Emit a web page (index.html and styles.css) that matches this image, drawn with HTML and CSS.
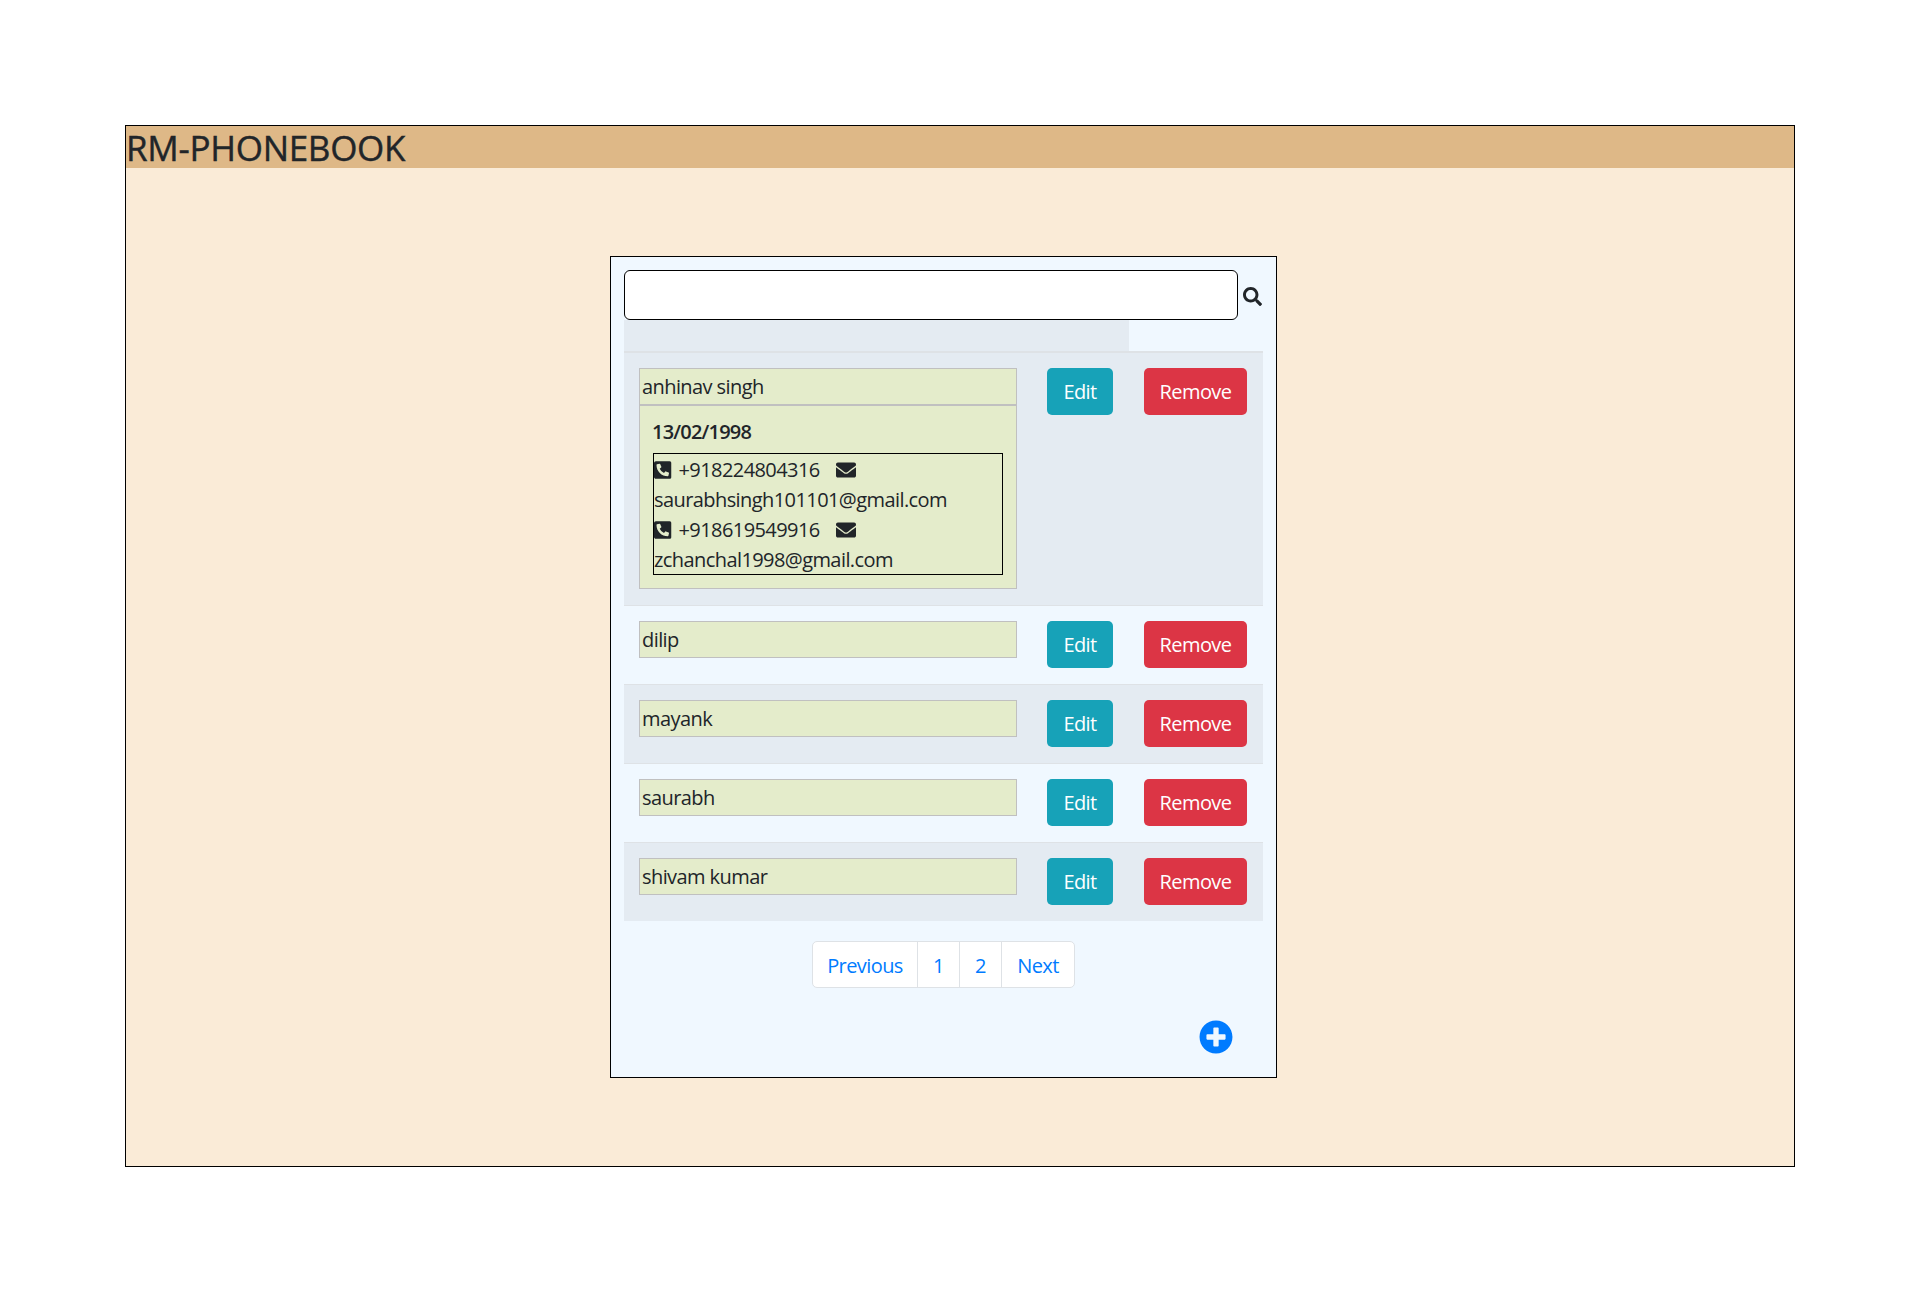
FILE: index.html
```html
<!DOCTYPE html>
<html lang="en">
<head>
<meta charset="utf-8">
<title>RM-PHONEBOOK</title>
<link rel="stylesheet" href="styles.css">
</head>
<body>
<svg class="sprite" aria-hidden="true">
  <defs>
    <symbol id="i-search" viewBox="0 0 512 512"><path d="M505 442.7L405.3 343c-4.5-4.5-10.6-7-17-7H372c27.6-35.3 44-79.7 44-128C416 93.1 322.9 0 208 0S0 93.1 0 208s93.1 208 208 208c48.3 0 92.7-16.4 128-44v16.3c0 6.4 2.5 12.5 7 17l99.7 99.7c9.4 9.4 24.6 9.4 33.9 0l28.3-28.3c9.4-9.4 9.4-24.6.1-34zM208 336c-70.7 0-128-57.2-128-128 0-70.7 57.2-128 128-128 70.7 0 128 57.2 128 128 0 70.7-57.2 128-128 128z"/></symbol>
    <symbol id="i-phone" viewBox="0 0 448 512"><path d="M400 32H48C21.49 32 0 53.49 0 80v352c0 26.51 21.49 48 48 48h352c26.51 0 48-21.49 48-48V80c0-26.51-21.49-48-48-48zm-16.39 307.37l-15 65A15 15 0 0 1 354 416C194 416 64 286.29 64 126a15.7 15.7 0 0 1 11.63-14.61l65-15A18.23 18.23 0 0 1 144 96a16.27 16.27 0 0 1 13.79 9.09l30 70A17.9 17.9 0 0 1 189 181a17 17 0 0 1-5.5 11.61l-37.89 31a231.91 231.91 0 0 0 110.78 110.78l31-37.89A17 17 0 0 1 299 291a17.85 17.85 0 0 1 5.91 1.21l70 30A16.25 16.25 0 0 1 384 336a17.41 17.41 0 0 1-.39 3.37z"/></symbol>
    <symbol id="i-mail" viewBox="0 0 512 512"><path d="M502.3 190.8c3.9-3.1 9.7-.2 9.7 4.7V400c0 26.5-21.5 48-48 48H48c-26.5 0-48-21.5-48-48V195.6c0-5 5.7-7.8 9.7-4.7 22.4 17.4 52.1 39.5 154.1 113.6 21.1 15.4 56.7 47.8 92.2 47.6 35.7.3 72-32.8 92.3-47.6 102-74.1 131.6-96.3 154-113.7zM256 320c23.2.4 56.6-29.2 73.4-41.4 132.7-96.3 142.8-104.7 173.4-128.7 5.8-4.5 9.2-11.5 9.2-18.9v-19c0-26.5-21.5-48-48-48H48C21.5 64 0 85.5 0 112v19c0 7.4 3.4 14.3 9.2 18.9 30.6 23.9 40.7 32.4 173.4 128.7 16.8 12.2 50.2 41.8 73.4 41.4z"/></symbol>
    <symbol id="i-plus" viewBox="0 0 512 512"><path d="M256 8C119 8 8 119 8 256s111 248 248 248 248-111 248-248S393 8 256 8zm144 276c0 6.6-5.4 12-12 12h-92v92c0 6.6-5.4 12-12 12h-56c-6.6 0-12-5.4-12-12v-92h-92c-6.6 0-12-5.4-12-12v-56c0-6.6 5.4-12 12-12h92v-92c0-6.6 5.4-12 12-12h56c6.6 0 12 5.4 12 12v92h92c6.6 0 12 5.4 12 12v56z"/></symbol>
  </defs>
</svg>

<main class="app">
  <h1 class="app-title">RM-PHONEBOOK</h1>
  <section class="card">
    <div class="search">
      <input class="search-input" type="text" aria-label="Search">
      <svg class="icon icon-search"><use href="#i-search"/></svg>
    </div>

    <div class="table">
      <div class="table-head"><div class="table-head-cell"></div></div>

      <div class="row row-odd">
        <div class="cell">
          <div class="name">anhinav singh</div>
          <div class="details">
            <div class="dob">13/02/1998</div>
            <div class="contacts">
              <div class="line">
                <svg class="icon icon-phone"><use href="#i-phone"/></svg>
                <span class="phone">+918224804316</span>
                <svg class="icon icon-mail"><use href="#i-mail"/></svg>
              </div>
              <div class="line">saurabhsingh101101@gmail.com</div>
              <div class="line">
                <svg class="icon icon-phone"><use href="#i-phone"/></svg>
                <span class="phone">+918619549916</span>
                <svg class="icon icon-mail"><use href="#i-mail"/></svg>
              </div>
              <div class="line">zchanchal1998@gmail.com</div>
            </div>
          </div>
        </div>
        <div class="cell"><button class="btn btn-edit">Edit</button></div>
        <div class="cell"><button class="btn btn-remove">Remove</button></div>
      </div>

      <div class="row">
        <div class="cell"><div class="name">dilip</div></div>
        <div class="cell"><button class="btn btn-edit">Edit</button></div>
        <div class="cell"><button class="btn btn-remove">Remove</button></div>
      </div>
      <div class="row row-odd">
        <div class="cell"><div class="name">mayank</div></div>
        <div class="cell"><button class="btn btn-edit">Edit</button></div>
        <div class="cell"><button class="btn btn-remove">Remove</button></div>
      </div>
      <div class="row">
        <div class="cell"><div class="name">saurabh</div></div>
        <div class="cell"><button class="btn btn-edit">Edit</button></div>
        <div class="cell"><button class="btn btn-remove">Remove</button></div>
      </div>
      <div class="row row-odd">
        <div class="cell"><div class="name">shivam kumar</div></div>
        <div class="cell"><button class="btn btn-edit">Edit</button></div>
        <div class="cell"><button class="btn btn-remove">Remove</button></div>
      </div>
    </div>

    <nav class="pager">
      <a class="page page-prev">Previous</a>
      <a class="page page-num">1</a>
      <a class="page page-num">2</a>
      <a class="page page-next">Next</a>
    </nav>

    <div class="add">
      <svg class="icon icon-plus"><use href="#i-plus"/></svg>
    </div>
  </section>
</main>
</body>
</html>
```

FILE: styles.css
```css
* { box-sizing: border-box; }

html, body { margin: 0; padding: 0; background: #fff; }

body {
  font-family: "Open Sans", "Noto Sans", sans-serif;
  font-size: 20px;
  line-height: 30px;
  color: #212529;
  letter-spacing: -0.58px;
}

.sprite { display: none; }

.icon { display: block; fill: #212529; flex: none; }

.app {
  width: 1670px;
  height: 1042px;
  margin: 125px 0 0 125px;
  border: 1px solid #000;
  background: #faebd7;
}

.app-title {
  margin: 0;
  height: 42px;
  background: #deb887;
  font-size: 35px;
  font-weight: 400;
  line-height: 44px;
  letter-spacing: -0.3px;
  -webkit-text-stroke: 0.4px #212529;
}

.card {
  width: 667px;
  height: 822px;
  margin: 88px 0 0 484px;
  padding: 13px;
  border: 1px solid #000;
  background: #f0f8ff;
}

.search { display: flex; align-items: center; height: 50px; }

.search-input {
  width: 614px;
  height: 50px;
  border: 1px solid #000;
  border-radius: 6px;
  background: #fff;
}

.icon-search { width: 19px; height: 19px; margin: 2px 0 0 5px; }

.table { width: 639px; }

.table-head { height: 33px; border-bottom: 2px solid #dee2e6; }
.table-head-cell { width: 505px; height: 31px; background: #e4ebf2; }

.row {
  display: grid;
  grid-template-columns: 408px 97px 134px;
  border-top: 1px solid #dee2e6;
  min-height: 79px;
}
.table-head + .row { border-top: 0; }

.row-odd { background: #e4ebf2; }

.cell { padding: 15px; }

.name {
  height: 37px;
  padding-left: 2px;
  border: 1px solid #c0c0c0;
  background: #e4eccb;
  line-height: 35px;
}

.details {
  height: 185px;
  margin: -1px 0 1px;
  padding: 11px 13px 0;
  border: 1px solid #c0c0c0;
  border-top-width: 2px;
  background: #e4eccb;
}

.dob { height: 36px; margin-left: -1px; font-weight: 600; line-height: 30px; letter-spacing: -0.8px; }

.contacts { height: 122px; padding-top: 1px; border: 1px solid #000; }

.line { display: flex; align-items: center; height: 30px; white-space: nowrap; }

.icon-phone { width: 17.5px; height: 20px; }
.phone { margin-left: 7px; }
.icon-mail { width: 20px; height: 20px; margin-left: 16px; }

.btn {
  display: block;
  height: 47px;
  padding: 0;
  border: 0;
  border-radius: 5px;
  color: #fff;
  font: inherit;
  letter-spacing: inherit;
}
.btn-edit { width: 66px; background: #17a2b8; }
.btn-remove { width: 103px; background: #dc3545; }

.pager {
  display: flex;
  width: 263px;
  height: 47px;
  margin: 20px 0 0 188px;
  background: #fff;
  border: 1px solid #dee2e6;
  border-radius: 5px;
  color: #007bff;
  line-height: 47px;
}

.page { display: block; text-align: center; }
.page-prev { width: 104px; }
.page-num { width: 42px; border-left: 1px solid #dee2e6; }
.page-next { flex: 1; border-left: 1px solid #dee2e6; }

.add { display: flex; justify-content: flex-end; margin: 32px 30px 0 0; }
.icon-plus { width: 34px; height: 34px; fill: #007bff; }
```
